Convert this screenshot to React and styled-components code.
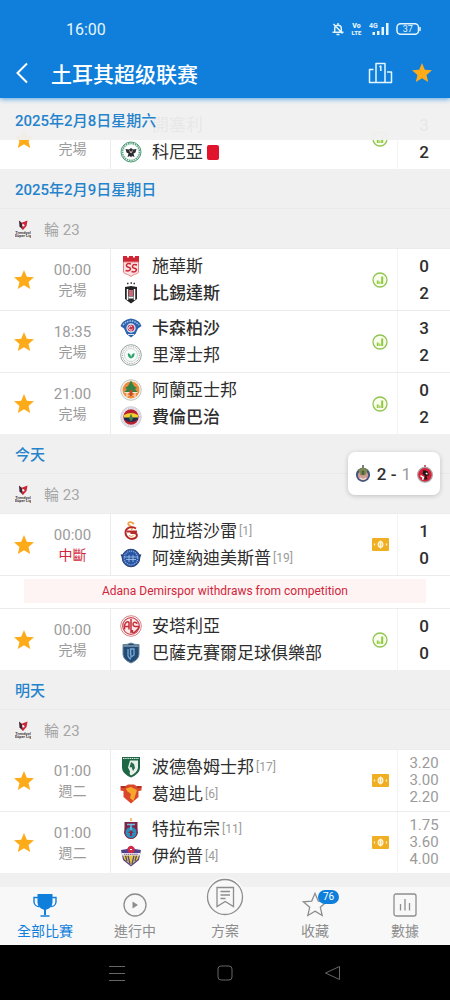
import React from 'react';
import styled, { createGlobalStyle, ThemeProvider } from 'styled-components';

const theme = {
  colors: {
    primary: '#107fdc',
    link: '#2583cc',
    star: '#fdab19',
    danger: '#d0263c',
    white: '#ffffff',
    bar: '#f0f0f0',
    line: '#ececec',
    text: { dark: '#2e2e2e', light: '#9b9b9b' },
  },
};

const GlobalStyle = createGlobalStyle`
  * {
    box-sizing: border-box;
  }

  body {
    margin: 0;
    font-family: Roboto, "Noto Sans CJK TC", sans-serif;
    color: ${theme.colors.text.dark};
  }

  h1, h2, p, ul {
    margin: 0;
    padding: 0;
    font-weight: normal;
  }

  ul {
    list-style: none;
  }

  svg {
    display: block;
    flex-shrink: 0;
  }
`;

/**
 * page frame
 *
 */

const Page = styled.div`
  display: flex;
  flex-direction: column;
  height: 100vh;
  overflow: hidden;
  background-color: ${({ theme }) => theme.colors.bar};
`;

const Header = styled.header`
  flex-shrink: 0;
  position: relative;
  z-index: 3;
  background-color: ${({ theme }) => theme.colors.primary};
  color: ${({ theme }) => theme.colors.white};
  box-shadow: 0 1px 5px rgba(16, 127, 220, 0.7);
`;

const StatusBar = styled.div`
  display: flex;
  align-items: center;
  justify-content: space-between;
  height: 48px;
  padding: 10px 28px 0 66px;
  font-size: 16px;
  color: #e4f4fb;
`;

const StatusIcons = styled.div`
  display: flex;
  align-items: center;
  gap: 7px;
`;

const TitleBar = styled.div`
  display: flex;
  align-items: center;
  height: 50px;
  padding: 0 16px;
`;

const Title = styled.h1`
  flex: 1;
  margin-left: 23px;
  font-family: "Noto Sans CJK SC", sans-serif;
  font-size: 21px;
  font-weight: 500;
  line-height: 28px;
`;

const IconButton = styled.button`
  display: flex;
  align-items: center;
  justify-content: center;
  padding: 0;
  border: 0;
  background: none;
  color: ${({ theme, $star }) => ($star ? theme.colors.star : 'inherit')};
  cursor: pointer;
`;

const TitleActions = styled.div`
  display: flex;
  align-items: center;
  gap: 17px;
`;

/**
 * match list
 *
 */

const Main = styled.main`
  flex: 1;
  min-height: 0;
  position: relative;
  padding-top: 9px;
  overflow: hidden;
`;

const DateBar = styled.h2`
  display: flex;
  align-items: center;
  height: 40px;
  padding: 0 15px;
  border-bottom: 1px solid #e9e9e9;
  background-color: ${({ theme }) => theme.colors.bar};
  color: ${({ theme }) => theme.colors.link};
  font-size: 15px;
  font-weight: 500;
`;

const PinnedDateBar = styled(DateBar)`
  position: absolute;
  top: 0;
  left: 0;
  right: 0;
  z-index: 2;
  height: 42px;
  border-bottom: 0;
  background-color: rgba(240, 240, 240, 0.96);
`;

const RoundBar = styled.div`
  display: flex;
  align-items: center;
  gap: 13px;
  height: 39px;
  padding: 0 15px;
  color: #a6a6a6;
  font-size: 15px;
`;

const MatchRow = styled.div`
  display: flex;
  height: 62px;
  border-top: 1px solid ${({ theme }) => theme.colors.line};
  background-color: ${({ theme }) => theme.colors.white};
`;

const StarButton = styled(IconButton)`
  width: 48px;
`;

const TimeCell = styled.div`
  display: flex;
  flex-direction: column;
  justify-content: center;
  width: 62px;
  padding-right: 13px;
  color: ${({ theme }) => theme.colors.text.light};
  font-size: 15px;
  line-height: 20px;
  text-align: center;

  & > span {
    min-height: 20px;
  }
`;

const MatchStatus = styled.span`
  color: ${({ theme, $alert }) => ($alert ? theme.colors.danger : 'inherit')};
  font-size: 14px;
`;

const Teams = styled.div`
  display: flex;
  flex: 1;
  flex-direction: column;
  justify-content: center;
  min-width: 0;
  padding-left: 9px;
  border-left: 1px solid ${({ theme }) => theme.colors.line};
`;

const Team = styled.div`
  display: flex;
  align-items: center;
  height: 27px;
`;

const TeamName = styled.span`
  margin-left: 10px;
  font-size: 17px;
  font-weight: ${({ $winner }) => ($winner ? 500 : 400)};
  line-height: 27px;
  white-space: nowrap;
`;

const Rank = styled.span`
  margin-left: 2px;
  color: ${({ theme }) => theme.colors.text.light};
  font-size: 12px;
`;

const RedCard = styled.span`
  width: 12px;
  height: 15px;
  margin-left: 4px;
  border-radius: 2px;
  background-color: #e0142d;
`;

const OddsLink = styled.a`
  display: flex;
  align-items: center;
  justify-content: center;
  width: 34px;
`;

const ScoreCell = styled.div`
  display: flex;
  flex-direction: column;
  justify-content: center;
  width: 53px;
  border-left: 1px solid #f4f4f4;
  font-size: 17px;
  font-weight: 500;
  line-height: 27px;
  text-align: center;
`;

const OddsCell = styled(ScoreCell)`
  color: ${({ theme }) => theme.colors.text.light};
  font-size: 15px;
  font-weight: 400;
  line-height: 17px;
`;

const NoteRow = styled.div`
  padding: 3px 24px 5px;
  border-top: 1px solid ${({ theme }) => theme.colors.line};
  background-color: ${({ theme }) => theme.colors.white};
`;

const Note = styled.p`
  background-color: #fff4f4;
  color: ${({ theme }) => theme.colors.danger};
  font-size: 12px;
  line-height: 24px;
  text-align: center;
`;

const LiveScore = styled.a`
  position: absolute;
  top: 354px;
  right: 10px;
  z-index: 2;
  display: flex;
  align-items: center;
  gap: 5px;
  height: 43px;
  padding: 0 6px;
  border-radius: 7px;
  background-color: ${({ theme }) => theme.colors.white};
  box-shadow: 0 1px 5px rgba(0, 0, 0, 0.2);
  color: ${({ theme }) => theme.colors.text.dark};
  font-size: 17px;
  font-weight: 500;
  text-decoration: none;
`;

const LosingScore = styled.span`
  color: ${({ theme }) => theme.colors.text.light};
  font-weight: 400;
`;

/**
 * bottom navigation
 *
 */

const TabBar = styled.nav`
  flex-shrink: 0;
  position: relative;
  z-index: 3;
  display: flex;
  height: 58px;
  background-color: #f8f8f8;
`;

const Tab = styled.a`
  display: flex;
  flex: 1;
  flex-direction: column;
  align-items: center;
  justify-content: flex-end;
  gap: 3px;
  padding-bottom: 3px;
  color: ${({ theme, $active }) => ($active ? theme.colors.primary : '#8d8d8d')};
  font-size: 14px;
  line-height: 22px;
  text-decoration: none;
`;

const TabIcon = styled.span`
  position: relative;
  display: flex;
  align-items: center;
  justify-content: center;
  height: 24px;
`;

const RaisedIcon = styled.span`
  display: flex;
  align-items: center;
  justify-content: center;
  height: 40px;
  border-radius: 20px;
  background-color: #f8f8f8;
`;

const Badge = styled.span`
  position: absolute;
  top: -3px;
  left: 17px;
  width: 21px;
  border-radius: 7px;
  background-color: ${({ theme }) => theme.colors.primary};
  color: ${({ theme }) => theme.colors.white};
  font-size: 10px;
  line-height: 14px;
  text-align: center;
`;

const SystemBar = styled.div`
  flex-shrink: 0;
  display: grid;
  grid-template-columns: repeat(3, 24%);
  align-items: center;
  justify-content: center;
  justify-items: center;
  height: 55px;
  background-color: #000000;
  color: #666666;
`;

/* icons */

const STAR_PATH = 'M12 17.27 18.18 21l-1.64-7.03L22 9.24l-7.19-.61L12 2 9.19 8.63 2 9.24l5.46 4.73L5.82 21z';

const StarIcon = ({ outline }) => (
  <svg
    width={outline ? 28 : 24}
    height={outline ? 28 : 24}
    viewBox="0 0 24 24"
    fill={outline ? 'none' : 'currentColor'}
    stroke={outline ? 'currentColor' : 'none'}
    strokeWidth="1.1"
  >
    <path d={STAR_PATH} />
  </svg>
);

const BackIcon = () => (
  <svg width="12" height="22" viewBox="0 0 12 22" fill="none" stroke="currentColor" strokeWidth="2">
    <path d="M11 1.5 1.5 11 11 20.5" />
  </svg>
);

const PodiumIcon = () => (
  <svg width="25" height="22" viewBox="0 0 25 22" fill="none" stroke="#e4f7ff" strokeWidth="1.5" strokeLinejoin="round">
    <path d="M8 20.5v-19h9v19M5.5 7.5h-4v13h22V10H19" />
    <path d="M11.5 5 12.8 4v5" />
  </svg>
);

const BellOffIcon = () => (
  <svg width="12" height="14" viewBox="0 0 12 14" fill="none" stroke="currentColor" strokeWidth="1.5">
    <path d="M2.7 10V6.500a3.300 3.300 0 0 1 6.600 0V10M.5 10.300h11M6 1v2M4.500 12.500h3M1.500 2l9 9.500" />
  </svg>
);

const VolteIcon = () => (
  <svg width="11" height="14" viewBox="0 0 11 14" fill="currentColor" fontWeight="900" textAnchor="middle">
    <text x="5.5" y="6" fontSize="7">Vo</text>
    <text x="5.5" y="13" fontSize="6">LTE</text>
  </svg>
);

const SignalIcon = () => (
  <svg width="20" height="14" viewBox="0 0 20 14" fill="currentColor">
    <text x="0" y="6" fontSize="7" fontWeight="700">4G</text>
    <path d="M3.500 10H6v3H3.500zM8 9h2.500v4H8zM12.500 5H15v8h-2.500zM17 1h2.500v12H17z" />
  </svg>
);

const BatteryIcon = () => (
  <svg width="26" height="12" viewBox="0 0 26 12">
    <rect x="1" y="0.7" width="21.5" height="10.6" rx="3.5" fill="none" stroke="currentColor" strokeWidth="1.5" />
    <path d="M24 4v4" stroke="currentColor" strokeWidth="1.5" />
    <text x="11.7" y="9" fontSize="9" fill="currentColor" textAnchor="middle">37</text>
  </svg>
);

const StatsIcon = () => (
  <svg width="16" height="16" viewBox="0 0 16 16">
    <circle cx="8" cy="8" r="7" fill="#f8fdee" stroke="#91c452" strokeWidth="1.3" />
    <path d="M4.800 8.500h1.800V12H4.800zM7.300 9.500h1.200V12H7.300zM9.200 4.500h2V12h-2z" fill="#8fca3c" />
  </svg>
);

const CashIcon = () => (
  <svg width="17" height="13" viewBox="0 0 17 13">
    <rect width="17" height="13" rx="1" fill="#f0ae22" />
    <ellipse cx="8.5" cy="6.5" rx="2.3" ry="2.8" fill="#f6cc6d" stroke="#fff6dc" strokeWidth="1.3" />
    <path d="M8.500 2.500v8M2.500 5.500v2M14.500 5.500v2" stroke="#fff6dc" strokeWidth="1.200" />
  </svg>
);

const LeagueIcon = () => (
  <svg width="16" height="18" viewBox="0 0 16 18" textAnchor="middle" fontWeight="700" fill="#4a4345">
    <path d="M4 .5 7 3l1 7-3.500-3.500z" fill="#3a2430" />
    <path d="M6 3 12.500.5 11.500 6 8 10 6.500 7 9.500 5z" fill="#cf2235" />
    <circle cx="8.5" cy="5.5" r="1" fill="#ffffff" />
    <text x="8" y="13.5" fontSize="4">Trendyol</text>
    <text x="8" y="17" fontSize="4">Süper Lig</text>
  </svg>
);

const TrophyIcon = () => (
  <svg width="24" height="24" viewBox="0 0 24 24" fill="none" stroke="currentColor" strokeWidth="1.4">
    <path d="M4.500 1h15v8.500a7.500 7.500 0 0 1-6.500 7.200V22h-2v-5.300a7.500 7.500 0 0 1-6.500-7.200z" fill="currentColor" stroke="none" />
    <path d="M5 4.500H1v4.500a5 5 0 0 0 5 4.500M19 4.500h4v4.500a5 5 0 0 1-5 4.500M7.500 23h9" />
  </svg>
);

const PlayIcon = () => (
  <svg width="24" height="24" viewBox="0 0 24 24" fill="none" stroke="currentColor" strokeWidth="1.3">
    <circle cx="12" cy="12" r="11" />
    <path d="M9.500 8.500v7l5.500-3.500z" fill="currentColor" stroke="none" />
  </svg>
);

const TipsIcon = () => (
  <svg width="40" height="40" viewBox="0 0 40 40" fill="none" stroke="currentColor" strokeWidth="1.3">
    <circle cx="20" cy="20" r="17.5" />
    <path d="M12 10.500h16.500v19L20.200 24.500 12 29.500zM15.500 14.500h9.500M15.500 18h9.500M15.500 21.500h5" />
  </svg>
);

const ChartIcon = () => (
  <svg width="24" height="24" viewBox="0 0 24 24" fill="none" stroke="currentColor" strokeWidth="1.3">
    <rect x="1" y="1" width="22" height="22" rx="2" />
    <path d="M7.500 11v6.500M12 6v11.500M16.500 10v7.500" />
  </svg>
);

const SystemMenuIcon = () => (
  <svg width="16" height="16" viewBox="0 0 16 16" stroke="currentColor">
    <path d="M0 1.500h16M0 8.500h16M0 15.500h16" />
  </svg>
);

const SystemHomeIcon = () => (
  <svg width="16" height="16" viewBox="0 0 16 16" fill="none" stroke="currentColor">
    <rect x="1" y="1" width="14" height="14" rx="3" />
  </svg>
);

const SystemBackIcon = () => (
  <svg width="16" height="16" viewBox="0 0 16 16" fill="none" stroke="currentColor" strokeLinejoin="round">
    <path d="M14.500 1.500v13L.5 8z" />
  </svg>
);

/* club crests, drawn on a 22x22 grid */

const crests = {
  kayseri: <circle cx="11" cy="11" r="10" fill="#d8d8d8" />,
  konya: (
    <>
      <circle cx="11" cy="11" r="10" fill="#eef5f0" stroke="#4c9a78" />
      <circle cx="11" cy="11" r="8.500" fill="none" stroke="#5da386" strokeWidth="1.600" strokeDasharray="1.400 0.900" />
      <circle cx="11" cy="11" r="7" fill="#ffffff" />
      <path d="M5.500 8 9 8.500l2-1.500 2 1.500 3.500-.5-1 3.500-2 1 1 3.500-2.500-1-1 1.500-1-1.500-2.500 1 1-3.500-2-1z" fill="#2c2d35" />
      <path d="M9.500 9.500 11 12l1.500-2.500" stroke="#e3c7ae" fill="none" />
    </>
  ),
  sivas: (
    <>
      <path d="M3 1h4v1.500h2V1h4v1.500h2V1h4v6H3z" fill="#cf2433" />
      <path d="M3.500 7h15v10c0 2-5 2-7.500 4.500C8.500 19 3.500 19 3.500 17z" fill="#fbe2e2" stroke="#e88085" />
      <path d="M11 9c-5-1.500-6 2.500-2.500 3.200s2 4.800-3 3.300M17 10c-5-1.500-6 2.500-2.500 3.200s2 4.800-3 3.300" fill="none" stroke="#cf2433" strokeWidth="1.500" />
    </>
  ),
  besiktas: (
    <>
      <path d="M7 1.500h1.500M10.500 1H12M13.500 1.500H15" stroke="#333333" strokeWidth="1.300" />
      <path d="M5 5 11 4l6 1v12l-6 4.500L5 17z" fill="#252525" />
      <path d="M7.500 7v11M14.500 7v11" stroke="#ffffff" strokeWidth="1.500" />
      <path d="M9 8h4v6H9z" fill="#cf6678" />
      <path d="M8.500 14.500h5v2h-5z" fill="#f5f5f5" />
    </>
  ),
  kasimpasa: (
    <>
      <path d="M.5 9Q2 3 11 1.500 20 3 21.500 9L18 11.500 15.500 17 11 20.500 6.500 17 4 11.500z" fill="#2b63ad" />
      <path d="M3 8q8-8 16 0" fill="none" stroke="#a9c7e9" strokeWidth="1.500" strokeDasharray="1.500 1" />
      <circle cx="11" cy="11" r="4.700" fill="#d6dff1" />
      <circle cx="11" cy="11" r="3.300" fill="#bd3450" />
      <path d="M12 9.500a2 2 0 1 0 .5 2.500" fill="none" stroke="#ffffff" />
      <path d="M8 17.500h6" stroke="#d4e2f3" />
    </>
  ),
  rize: (
    <>
      <circle cx="11" cy="11" r="10.300" fill="#ffffff" stroke="#91a99e" />
      <circle cx="11" cy="11" r="8.400" fill="none" stroke="#b9a9b0" strokeWidth="1.200" strokeDasharray="1 0.800" />
      <circle cx="11" cy="11" r="6.500" fill="#f8fcfa" stroke="#b5c8c1" strokeWidth="0.700" />
      <path d="M11 14.500c-3-1-3.500-3.500-3-5.500 2 .5 3.500 2.500 3 5.500zM11 14.500c0-3 1-5 3.500-5.500.5 2.500-1 5-3.500 5.500z" fill="#2da36c" />
    </>
  ),
  alanya: (
    <>
      <circle cx="11" cy="11" r="10.300" fill="#f2f2ed" stroke="#c3c8bd" />
      <circle cx="11" cy="11" r="8.500" fill="#ef8b3d" />
      <path d="M11 1.500 14 7l3 2-2 1 2.500 3h-13L7 10 5 9l3-2z" fill="#328345" />
      <path d="M4.500 13.500h13M7 13v5M15 13v5M8.500 16.500h5" stroke="#f8e8cf" strokeWidth="1.200" />
      <path d="M9.500 11h3v6h-3z" fill="#c44a2e" />
    </>
  ),
  fenerbahce: (
    <>
      <circle cx="11" cy="11" r="10.300" fill="#eceaf0" stroke="#cfced6" />
      <circle cx="11" cy="11" r="9" fill="none" stroke="#b9b8c6" strokeDasharray="1 1.300" />
      <circle cx="11" cy="11" r="7.700" fill="#b8202f" />
      <path d="M4 9q7-4 14 0v4q-7 4-14 0z" fill="#f2cf2e" />
      <path d="M4 11.500h14v2q-7 5-14 0z" fill="#232a50" />
      <path d="M11 7.500 13 12.500 11 15.500 9 12.500z" fill="#418049" />
    </>
  ),
  galatasaray: (
    <>
      <path d="M14 4C10.500.5 6.500 2.500 9 5s5 2.500 2 4.500" fill="none" stroke="#f0a24a" strokeWidth="1.800" />
      <path d="M16 8.500C11 5.500 5.500 8 5.500 12.500S10 20 14 18.500s3.500-5 .5-5.500h-4M7 11.500h10" fill="none" stroke="#b52a27" strokeWidth="1.900" />
      <path d="M9 15.500q2.500 2 4.500 0" fill="none" stroke="#ec9638" />
    </>
  ),
  adana: (
    <>
      <path d="M.5 7.500h21L19 13H3z" fill="#22396f" />
      <circle cx="11" cy="11" r="8.800" fill="#2a56a5" stroke="#2b4177" />
      <circle cx="11" cy="11" r="6.800" fill="none" stroke="#93b5e4" strokeWidth="1.200" strokeDasharray="1 1" />
      <path d="M4 10h14M6 12.500h10M9 8v7M13 8v7" stroke="#a7c5ee" strokeWidth="0.800" />
    </>
  ),
  antalya: (
    <>
      <circle cx="11" cy="11" r="10.300" fill="#ffffff" stroke="#d98488" />
      <circle cx="11" cy="11" r="8.300" fill="#fbeaea" stroke="#cb4851" strokeWidth="1.200" />
      <path d="M4.500 14.500V10Q7 5 9 7.500v7M4.500 11.500H9M11 4v14M17.500 8.500Q13 6 13 9t4 2.500-.5 4-4-.5" fill="none" stroke="#c52c38" strokeWidth="1.500" />
    </>
  ),
  basaksehir: (
    <>
      <path d="M3 2.500Q7 3 11 1q4 2 8 1.500v10Q18.500 18 11 21 3.500 18 3 12.500z" fill="#224b75" stroke="#6a869d" />
      <path d="M3.500 4h15" stroke="#b9c7d2" />
      <path d="M8 7v7q1 2.500 3 3M10.500 7h3.500v6l-3 2zM10.500 7v6" fill="none" stroke="#78a9d3" strokeWidth="1.300" />
    </>
  ),
  bodrum: (
    <>
      <path d="M2 1h18v11q-.5 6-9 9.500Q2.500 18 2 12z" fill="#1e6644" />
      <path d="M3 2.500h16" stroke="#dfeae4" strokeDasharray="1.500 0.700" />
      <path d="M10 4.500h8V12q-1 5-7 7.500-2-1-1-4l-2-4z" fill="#e9f1ed" />
      <path d="m11 6 3 2 1 4-2 3-1.500-4-2 .5z" fill="#286e4c" />
    </>
  ),
  goztepe: (
    <>
      <path d="M.5 3h5L8 1.500h6L16.500 3h5v4.500L18.500 8v6L11 20.500 3.500 14V8L.5 7.500z" fill="#d9482a" />
      <path d="M6 5.500 11 4l6 3-3.500 11-3.500-3 1-4-4-3z" fill="#f4a72b" />
      <path d="M1 4h4.500M17 4h4.500" stroke="#a52627" strokeWidth="1.500" />
    </>
  ),
  trabzon: (
    <>
      <path d="M11 0v3" stroke="#efad43" strokeWidth="1.500" />
      <path d="M4.500 4h13v5q0 2 .5 6-2 6-7 6t-7-6q.5-4 .5-6z" fill="#7d2549" />
      <circle cx="11" cy="14.500" r="5.500" fill="#2d8fb9" />
      <path d="M7 6.500h8M11 6.500v6" stroke="#6fc0df" strokeWidth="1.500" />
      <path d="m11 12-3 3h2v3h2v-3h2z" fill="#862a4b" />
    </>
  ),
  eyup: (
    <>
      <path d="M1 5 7 4l4-3.500L15 4l6 1-2 10-8 6.500L3 15z" fill="#54428c" />
      <path d="M3 10h16l-1 4-7 6-7-6z" fill="#e2c63b" />
      <path d="M8 10.500 10 19M14 10.500 12 19M5.500 10.500 7 16M16.500 10.500 15 16" stroke="#54428c" strokeWidth="1.200" />
      <circle cx="11" cy="4.500" r="3.500" fill="#d52a45" />
      <path d="M1.500 8h19v2.500h-19z" fill="#eee6ee" />
      <path d="M4 9.300h14" stroke="#705f9e" strokeDasharray="1.300 0.600" />
      <path d="M10 4.500h2" stroke="#ffffff" />
    </>
  ),
  guadalajara: (
    <>
      <path d="M11 0v4" stroke="#5b6172" strokeWidth="2" />
      <circle cx="11" cy="12" r="8.700" fill="#44567a" />
      <circle cx="11" cy="12.500" r="6.200" fill="#d09c97" />
      <path d="M5.500 6 11 2.500 16.500 6l-2.500 6.500H8z" fill="#7f8a4c" />
      <path d="M9.500 7h3v5h-3z" fill="#4c6040" />
      <path d="M7 16q4 3 8 0" fill="none" stroke="#f0dfe1" strokeWidth="1.500" />
    </>
  ),
  tijuana: (
    <>
      <path d="M11 0v3" stroke="#bd2939" strokeWidth="1.800" />
      <circle cx="11" cy="12" r="9" fill="#d91f35" stroke="#a5a5aa" strokeWidth="1.500" />
      <path d="m9 6 5 1.500 2 5-3 1 1 4-4 .5 1-5-3-2z" fill="#191919" />
      <path d="M5.500 13 9 15l-1 3M12 10l2 1" stroke="#ffffff" strokeWidth="1.800" fill="none" />
    </>
  ),
};

const Crest = ({ club, size = 22 }) => (
  <svg width={size} height={size} viewBox="0 0 22 22" aria-hidden="true">
    {crests[club]}
  </svg>
);

/* data */

const previousMatch = {
  time: '',
  status: '完場',
  teams: [
    { club: 'kayseri', name: '開塞利', score: 3, winner: true },
    { club: 'konya', name: '科尼亞', score: 2, redCard: true },
  ],
};

const days = [
  {
    title: '2025年2月9日星期日',
    matches: [
      {
        time: '00:00',
        status: '完場',
        teams: [
          { club: 'sivas', name: '施華斯', score: 0 },
          { club: 'besiktas', name: '比錫達斯', score: 2, winner: true },
        ],
      },
      {
        time: '18:35',
        status: '完場',
        teams: [
          { club: 'kasimpasa', name: '卡森柏沙', score: 3, winner: true },
          { club: 'rize', name: '里澤士邦', score: 2 },
        ],
      },
      {
        time: '21:00',
        status: '完場',
        teams: [
          { club: 'alanya', name: '阿蘭亞士邦', score: 0 },
          { club: 'fenerbahce', name: '費倫巴治', score: 2, winner: true },
        ],
      },
    ],
  },
  {
    title: '今天',
    matches: [
      {
        time: '00:00',
        status: '中斷',
        alert: true,
        cash: true,
        note: 'Adana Demirspor withdraws from competition',
        teams: [
          { club: 'galatasaray', name: '加拉塔沙雷', rank: 1, score: 1 },
          { club: 'adana', name: '阿達納迪美斯普', rank: 19, score: 0 },
        ],
      },
      {
        time: '00:00',
        status: '完場',
        teams: [
          { club: 'antalya', name: '安塔利亞', score: 0 },
          { club: 'basaksehir', name: '巴薩克賽爾足球俱樂部', score: 0 },
        ],
      },
    ],
  },
  {
    title: '明天',
    matches: [
      {
        time: '01:00',
        status: '週二',
        cash: true,
        odds: ['3.20', '3.00', '2.20'],
        teams: [
          { club: 'bodrum', name: '波德魯姆士邦', rank: 17 },
          { club: 'goztepe', name: '葛迪比', rank: 6 },
        ],
      },
      {
        time: '01:00',
        status: '週二',
        cash: true,
        odds: ['1.75', '3.60', '4.00'],
        teams: [
          { club: 'trabzon', name: '特拉布宗', rank: 11 },
          { club: 'eyup', name: '伊約普', rank: 4 },
        ],
      },
    ],
  },
];

const Match = ({ match }) => (
  <>
    <MatchRow>
      <StarButton type="button" aria-label="收藏" $star>
        <StarIcon />
      </StarButton>

      <TimeCell>
        <span>{match.time}</span>
        <MatchStatus $alert={match.alert}>{match.status}</MatchStatus>
      </TimeCell>

      <Teams>
        {match.teams.map(team => (
          <Team key={team.club}>
            <Crest club={team.club} />
            <TeamName $winner={team.winner}>{team.name}</TeamName>
            {team.rank ? <Rank>{`[${team.rank}]`}</Rank> : null}
            {team.redCard ? <RedCard /> : null}
          </Team>
        ))}
      </Teams>

      <OddsLink href="#odds" aria-label="指數">
        {match.cash ? <CashIcon /> : <StatsIcon />}
      </OddsLink>

      {
        match.odds
          ? <OddsCell>{match.odds.map(value => <span key={value}>{value}</span>)}</OddsCell>
          : <ScoreCell>{match.teams.map(team => <span key={team.club}>{team.score}</span>)}</ScoreCell>
      }
    </MatchRow>

    {match.note ? <NoteRow><Note>{match.note}</Note></NoteRow> : null}
  </>
);

const App = () => (
  <ThemeProvider theme={theme}>
    <GlobalStyle />
    <Page>
      <Header>
        <StatusBar>
          <span>16:00</span>
          <StatusIcons>
            <BellOffIcon />
            <VolteIcon />
            <SignalIcon />
            <BatteryIcon />
          </StatusIcons>
        </StatusBar>

        <TitleBar>
          <IconButton type="button" aria-label="返回">
            <BackIcon />
          </IconButton>
          <Title>土耳其超级联赛</Title>
          <TitleActions>
            <IconButton type="button" aria-label="積分榜">
              <PodiumIcon />
            </IconButton>
            <IconButton type="button" aria-label="收藏聯賽" $star>
              <StarIcon />
            </IconButton>
          </TitleActions>
        </TitleBar>
      </Header>

      <Main>
        <PinnedDateBar>2025年2月8日星期六</PinnedDateBar>
        <Match match={previousMatch} />

        {days.map(day => (
          <section key={day.title}>
            <DateBar>{day.title}</DateBar>
            <RoundBar>
              <LeagueIcon />
              <span>輪 23</span>
            </RoundBar>
            <ul>
              {day.matches.map(match => (
                <li key={match.teams[0].club}>
                  <Match match={match} />
                </li>
              ))}
            </ul>
          </section>
        ))}

        <LiveScore href="#live">
          <Crest club="guadalajara" size={18} />
          <span>2 -</span>
          <LosingScore>1</LosingScore>
          <Crest club="tijuana" size={18} />
        </LiveScore>
      </Main>

      <TabBar>
        <Tab href="#all" $active>
          <TabIcon><TrophyIcon /></TabIcon>
          全部比賽
        </Tab>
        <Tab href="#playing">
          <TabIcon><PlayIcon /></TabIcon>
          進行中
        </Tab>
        <Tab href="#tips">
          <RaisedIcon><TipsIcon /></RaisedIcon>
          方案
        </Tab>
        <Tab href="#favourites">
          <TabIcon>
            <StarIcon outline />
            <Badge>76</Badge>
          </TabIcon>
          收藏
        </Tab>
        <Tab href="#data">
          <TabIcon><ChartIcon /></TabIcon>
          數據
        </Tab>
      </TabBar>

      <SystemBar>
        <SystemMenuIcon />
        <SystemHomeIcon />
        <SystemBackIcon />
      </SystemBar>
    </Page>
  </ThemeProvider>
);

export default App;
